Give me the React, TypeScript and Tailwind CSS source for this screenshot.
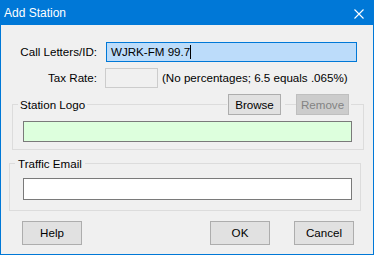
import React from 'react';

function Button({ children, className = '', disabled = false }: { children: React.ReactNode; className?: string; disabled?: boolean }) {
  return (
    <div
      className={`flex items-center justify-center border ${
        disabled ? 'bg-[#cccccc] border-[#bfbfbf] text-[#838383]' : 'bg-[#e1e1e1] border-[#adadad] text-black'
      } ${className}`}
    >
      {children}
    </div>
  );
}

function Line({ className = '' }: { className?: string }) {
  return <div className={`mt-[10px] border-t border-[#dcdcdc] ${className}`} />;
}

function App() {
  return (
    <div className="w-[374px] h-[255px] border border-[#0078d7] bg-[#f0f0f0] flex flex-col font-['Liberation_Sans',Arial,sans-serif] text-[11.6px] text-black leading-none">
      {/* Title bar */}
      <div className="h-[24px] bg-[#0078d7] flex items-center justify-between pl-[3px] pr-[9px] text-white">
        <span className="text-[12px]">Add Station</span>
        <svg width="10" height="10" viewBox="0 0 10 10" className="mt-[1px]">
          <path d="M0.5 0.5 L9.5 9.5 M9.5 0.5 L0.5 9.5" stroke="white" strokeWidth="1.1" />
        </svg>
      </div>

      {/* Call letters */}
      <div className="mt-[17px] flex items-center h-[20px]">
        <div className="w-[96px] text-right">Call Letters/ID:</div>
        <div className="ml-[9px] w-[251px] h-[20px] border border-[#0078d7] bg-[#bcdcfa] flex items-center pl-[4px]">
          <span>WJRK-FM 99.7</span>
          <span className="w-[1px] h-[14px] bg-black" />
        </div>
      </div>

      {/* Tax rate */}
      <div className="mt-[6px] flex items-center h-[20px]">
        <div className="w-[96px] text-right">Tax Rate:</div>
        <div className="ml-[8px] w-[53px] h-[20px] border border-[#cccccc] bg-[#f0f0f0]" />
        <div className="ml-[4px]">(No percentages; 6.5 equals .065%)</div>
      </div>

      {/* Station Logo group */}
      <div className="ml-[11px] mt-[6px] w-[352px] flex flex-col">
        <div className="flex h-[21px]">
          <Line className="w-[6px] border-l" />
          <div className="flex items-center px-[2px]">Station Logo</div>
          <Line className="flex-1" />
          <Button className="ml-[1px] w-[53px] h-[21px]">Browse</Button>
          <Line className="ml-[4px] w-[11px]" />
          <Button disabled className="w-[53px] h-[21px]">Remove</Button>
          <Line className="ml-[2px] w-[13px] border-r" />
        </div>
        <div className="border-x border-b border-[#dcdcdc] pt-[6px] pb-[7px] pl-[10px]">
          <div className="w-[329px] h-[21px] border border-[#7a7a7a] bg-[#ddffdd]" />
        </div>
      </div>

      {/* Traffic Email group */}
      <div className="ml-[8px] mt-[3px] w-[352px] flex flex-col">
        <div className="flex h-[21px]">
          <Line className="w-[6px] border-l" />
          <div className="flex items-center px-[3px]">Traffic Email</div>
          <Line className="flex-1 border-r" />
        </div>
        <div className="border-x border-b border-[#dcdcdc] pt-[4px] pb-[10px] pl-[13px]">
          <div className="w-[329px] h-[22px] border border-[#7a7a7a] bg-white" />
        </div>
      </div>

      {/* Bottom buttons */}
      <div className="mt-[10px] flex">
        <Button className="ml-[21px] w-[60px] h-[24px]">Help</Button>
        <Button className="ml-[128px] w-[60px] h-[24px]">OK</Button>
        <Button className="ml-[24px] w-[60px] h-[24px]">Cancel</Button>
      </div>
    </div>
  );
}

export default App;
